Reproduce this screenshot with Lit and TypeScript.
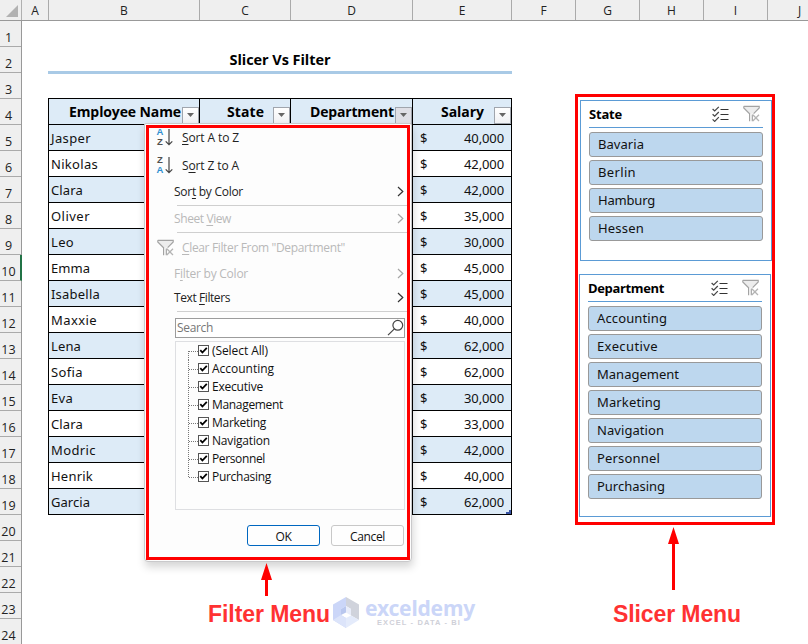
import { LitElement, html, css, svg } from "lit";
import { customElement, property } from "lit/decorators.js";
import { classMap } from "lit/directives/class-map.js";

/** A run of text whose tracking is adjusted so that it fills `w` pixels. */
@customElement("fit-text")
class FitText extends LitElement {
  @property({ type: Number }) w = 0;
  static styles = css`
    :host {
      display: inline-block;
      white-space: pre;
      flex: none;
    }
  `;
  updated() {
    this.style.letterSpacing = "0px";
    const n = (this.textContent ?? "").length;
    const natural = this.getBoundingClientRect().width;
    if (n && this.w) this.style.letterSpacing = `${(this.w - natural) / n}px`;
  }
  render() {
    return html`<slot></slot>`;
  }
}

const COLUMNS: [string, number][] = [
  ["A", 27], ["B", 151], ["C", 91], ["D", 122], ["E", 99],
  ["F", 64], ["G", 64], ["H", 64], ["I", 64], ["J", 64],
];
const ROWS = Array.from({ length: 24 }, (_, i) => i + 1);

const PEOPLE: [string, number, string][] = [
  ["Jasper", 40, "40,000"], ["Nikolas", 47, "42,000"], ["Clara", 32, "42,000"],
  ["Oliver", 39, "35,000"], ["Leo", 23, "30,000"], ["Emma", 39, "45,000"],
  ["Isabella", 49, "45,000"], ["Maxxie", 46, "40,000"], ["Lena", 30, "62,000"],
  ["Sofia", 32, "62,000"], ["Eva", 22, "30,000"], ["Clara", 32, "33,000"],
  ["Modric", 45, "42,000"], ["Henrik", 42, "40,000"], ["Garcia", 39, "62,000"],
];

const CHOICES: [string, number][] = [
  ["(Select All)", 56], ["Accounting", 62], ["Executive", 51], ["Management", 71],
  ["Marketing", 54], ["Navigation", 58], ["Personnel", 53], ["Purchasing", 59],
];

const STATES: [string, number][] = [
  ["Bavaria", 46], ["Berlin", 38], ["Hamburg", 57], ["Hessen", 46],
];
const DEPARTMENTS: [string, number][] = [
  ["Accounting", 70], ["Executive", 61], ["Management", 82], ["Marketing", 64],
  ["Navigation", 67], ["Personnel", 63], ["Purchasing", 68],
];

const funnel = svg`
  <path d="M1.4 1.9H15.6V2.8L9.6 8.8H7L1.4 3Z" fill="#ededed"/>
  <path d="M.8 1.3H16.2V3L10.6 8.6M.8 1.3V3L6.6 8.8V16.2M9.3 16.2V9.6" fill="none" stroke="#a3a3a3" stroke-width="1.2"/>
  <path d="M9.8 9.8L16 16M16 9.8L9.8 16" fill="none" stroke="#b4b4b4" stroke-width="1.3"/>`;

const funnelIcon = html`<svg class="funnel" width="17" height="17" viewBox="0 0 17 17">${funnel}</svg>`;

const checklistIcon = html`<svg width="17" height="16" viewBox="0 0 17 16" fill="none" stroke="#444" stroke-width="1.2">
  <path d="M.6 3L2.7 5L6.8 .8M.6 8.2L2.7 10.2L6.8 6M.6 13.4L2.7 15.4L6.8 11.2"/>
  <path d="M8.5 3.5H16.5M8.5 8.5H16.5M8.5 13.5H16.5" stroke="#333"/>
</svg>`;

const chevron = html`<svg class="chev" width="7" height="11" viewBox="0 0 7 11" fill="none" stroke="currentColor" stroke-width="1.2"><path d="M1 1L5.8 5.5L1 10"/></svg>`;

const sortIcon = (top: string, bottom: string) => html`<span class="sort">
  <span class="letters"><i class=${classMap({ blue: top === "A" })}>${top}</i><i class=${classMap({ blue: bottom === "A" })}>${bottom}</i></span>
  <svg width="8" height="17" viewBox="0 0 8 17" fill="none" stroke="#444" stroke-width="1.2"><path d="M4 0V15.6M.7 12.3L4 15.7L7.3 12.3"/></svg>
</span>`;

@customElement("filter-menu")
class FilterMenu extends LitElement {
  static styles = css`
    :host {
      display: block;
      box-sizing: border-box;
      background: #fdfdfd;
      border: 1px solid #c9c9cb;
      border-radius: 2px 2px 4px 4px;
      box-shadow: 1px 5px 9px rgba(0, 0, 0, 0.17);
      color: #222;
      font: 12px/16px "Open Sans", sans-serif;
    }
    .body { padding: 1px 2px 0 11px; }
    .item { display: flex; align-items: center; height: 26px; padding-left: 18px; }
    .item.icon { padding-left: 0; }
    .item.second { margin-top: 2px; }
    .item.clear { margin-top: 2px; }
    .item.text { height: 22px; margin-bottom: 2px; }
    .lead { width: 26px; display: flex; align-items: center; flex: none; }
    .off { color: #b9b9b9; }
    .chev { margin-left: auto; margin-right: 5px; margin-bottom: 1px; color: #333; }
    .off .chev { color: #a5a5a5; }
    .funnel { margin-left: 1px; margin-top: -1px; }
    .sep { height: 1px; background: #cfcfcf; margin-left: 21px; }
    .item u { text-underline-offset: 2px; text-decoration-thickness: 1px; }
    .sort { display: flex; align-items: center; gap: 1px; height: 20px; margin-top: -2px; }
    .letters { display: flex; flex-direction: column; width: 8px; }
    .letters i { font: bold 9.5px/10px "Liberation Sans", sans-serif; color: #505050; text-align: center; }
    .letters i.blue { color: #2e8fd0; }
    .search {
      box-sizing: border-box; display: flex; align-items: center; justify-content: space-between;
      width: 230px; height: 20px; margin: 6px 0 0 19px; padding: 0 0 1px 1px;
      border: 1px solid #9c9c9c; background: #fff; color: #777;
    }
    .list {
      box-sizing: border-box; width: 230px; height: 169px; margin: 3px 0 0 19px;
      border: 1px solid #dedfe2; padding: 0 0 0 12px; color: #111;
    }
    .choice { display: flex; align-items: center; height: 18px; }
    .branch { width: 10px; height: 18px; flex: none; }
    .box { margin: 0 3px 1px 0; flex: none; }
    .actions { display: flex; gap: 11px; margin: 15px 0 0 91px; }
    .btn {
      box-sizing: border-box; width: 73px; height: 21px; border: 1px solid #c8c8c8; border-radius: 3px;
      background: #fefefe; color: #111; display: flex; align-items: center; justify-content: center;
      padding-top: 2px;
    }
    .btn.primary { border-color: #0067c0; }
  `;
  render() {
    return html`<div class="body">
      <div class="item icon"><span class="lead">${sortIcon("A", "Z")}</span><fit-text w="57"><u>S</u>ort A to Z</fit-text></div>
      <div class="item icon second"><span class="lead">${sortIcon("Z", "A")}</span><fit-text w="57">S<u>o</u>rt Z to A</fit-text></div>
      <div class="item"><fit-text w="69">Sor<u>t</u> by Color</fit-text>${chevron}</div>
      <div class="sep"></div>
      <div class="item off"><fit-text w="57">Sheet <u>V</u>iew</fit-text>${chevron}</div>
      <div class="sep"></div>
      <div class="item icon off clear"><span class="lead">${funnelIcon}</span><fit-text w="163"><u>C</u>lear Filter From "Department"</fit-text></div>
      <div class="item off"><fit-text w="74">F<u>i</u>lter by Color</fit-text>${chevron}</div>
      <div class="item text"><fit-text w="56">Text <u>F</u>ilters</fit-text>${chevron}</div>
      <div class="sep"></div>
      <div class="search"><fit-text w="36">Search</fit-text>
        <svg width="17" height="17" viewBox="0 0 17 17" fill="none" stroke="#444" stroke-width="1.2"><circle cx="10.8" cy="6.3" r="4.9"/><path d="M7.4 9.8L1 16.2"/></svg>
      </div>
      <div class="list">
        ${CHOICES.map(([name, w], i) => html`<div class="choice">
          <svg class="branch" viewBox="0 0 10 18" stroke="#777" stroke-dasharray="1 1" fill="none">
            <path d=${`M.5 ${i === 0 ? 9 : 0}V${i === CHOICES.length - 1 ? 10 : 18}M1 9.5H10`}/>
          </svg>
          <svg class="box" width="11" height="11" viewBox="0 0 11 11"><rect x=".5" y=".5" width="10" height="10" fill="#fff" stroke="#555"/><path d="M2.3 5.2L4.4 7.5L8.8 2.8" fill="none" stroke="#000" stroke-width="1.8"/></svg>
          <fit-text w=${w}>${name}</fit-text>
        </div>`)}
      </div>
      <div class="actions">
        <div class="btn primary"><fit-text w="16">OK</fit-text></div>
        <div class="btn"><fit-text w="35">Cancel</fit-text></div>
      </div>
    </div>`;
  }
}

@customElement("slicer-panel")
class SlicerPanel extends LitElement {
  @property() caption = "";
  @property({ type: Number }) captionWidth = 0;
  @property({ attribute: false }) items: [string, number][] = [];
  static styles = css`
    :host {
      display: block; box-sizing: border-box; background: #fff; border: 1px solid #5b9bd5;
      padding: 0 8px; color: #111; font: 13px/18px "Noto Sans", sans-serif;
    }
    .head {
      display: flex; align-items: center; height: 26px; border-bottom: 1px solid #5b9bd5;
      font-weight: bold; color: #000; font-family: "Open Sans", sans-serif;
    }
    .icons { display: flex; align-items: center; gap: 14px; margin: -1px 3px 0 auto; }
    .icons svg { display: block; }
    .list { display: flex; flex-direction: column; gap: 3px; padding-top: 4px; }
    .btn {
      box-sizing: border-box; height: 25px; border: 1px solid #999; border-radius: 3px;
      background: #bdd7ee; padding: 0 0 2px 8px; display: flex; align-items: center;
    }
  `;
  render() {
    return html`<div class="head"><fit-text .w=${this.captionWidth}>${this.caption}</fit-text>
        <div class="icons">${checklistIcon}${funnelIcon}</div></div>
      <div class="list">${this.items.map(([n, w]) => html`<div class="btn"><fit-text w=${w}>${n}</fit-text></div>`)}</div>`;
  }
}

@customElement("app-root")
class AppRoot extends LitElement {
  static styles = css`
    :host {
      display: block; width: 808px; height: 644px; overflow: hidden; position: relative;
      background: #fff; color: #111; font: 13px/18px "Noto Sans", sans-serif;
    }
    .cols { display: flex; height: 21px; box-sizing: border-box; background: #efefef; border-bottom: 1px solid #999; width: 860px; }
    .corner { width: 22px; box-sizing: border-box; border-right: 1px solid #b0b0b0; flex: none; }
    .corner svg { display: block; }
    .col {
      box-sizing: border-box; flex: none; text-align: center; font: 12px/21px "Open Sans", sans-serif;
      border-right: 1px solid #aaa; color: #222;
    }
    .below { display: flex; }
    .rows { width: 22px; box-sizing: border-box; background: #efefef; border-right: 1px solid #999; flex: none; }
    .row {
      box-sizing: border-box; height: 26px; border-bottom: 1px solid #aaa; padding: 8px 4px 0 0;
      text-align: center; color: #222; font: 12.5px/18px "Open Sans", sans-serif;
    }
    .row.current { border-right: 2px solid #217346; margin-right: -1px; padding-right: 3px; }
    .sheet { padding: 26px 0 0 26px; }
    .title {
      box-sizing: border-box; width: 464px; height: 27px; border-bottom: 3px solid #a9cae6; color: #000;
      display: flex; justify-content: center; align-items: center; padding-top: 2px;
      font: bold 14.5px/18px "Open Sans", sans-serif;
    }
    .table {
      width: 464px; box-sizing: border-box; margin-top: 24px; border: solid #000; border-width: 1px 0 0 1px;
      display: grid; grid-template-columns: 151px 91px 122px 99px; grid-auto-rows: 26px;
    }
    .cell {
      box-sizing: border-box; border: solid #000; border-width: 0 1px 1px 0; padding: 0 7px 0 2px;
      display: flex; align-items: center; justify-content: space-between; background: #fff; position: relative;
    }
    .band { background: #ddebf7; }
    .head {
      background: #ddebf7; font: bold 14px/18px "Open Sans", sans-serif; color: #000; padding: 0;
      justify-content: flex-end;
    }
    .head fit-text { margin-top: 1px; }
    .drop {
      box-sizing: border-box; width: 17px; height: 17px; border: 1px solid #a0a5ad; margin-top: 7px;
      background: linear-gradient(#fff, #f0f1f4); display: grid; place-items: center; flex: none;
    }
    .drop.active { background: #dfdfe6; }
    .handle { position: absolute; right: 0; bottom: 0; }
    .money { padding-left: 7px; }
    .menu { position: absolute; left: 144px; top: 123px; width: 268px; height: 439px; }
    .mark { position: absolute; box-sizing: border-box; border: 3px solid #ff0000; }
    .mark.filter { left: 146px; top: 125px; width: 264px; height: 435px; }
    .mark.slicer { left: 575px; top: 94px; width: 200px; height: 431px; }
    .state { position: absolute; left: 580px; top: 100px; width: 192px; height: 161px; }
    .department { position: absolute; left: 579px; top: 274px; width: 192px; height: 243px; }
    .arrow { position: absolute; }
    .arrow.filter { left: 261px; top: 563px; }
    .arrow.slicer { left: 668px; top: 527px; }
    .label { position: absolute; font: bold 23px/28px "Liberation Sans", sans-serif; color: #ff3232; }
    .label.filter { left: 208px; top: 600px; }
    .label.slicer { left: 613px; top: 600px; }
    .brand { position: absolute; left: 332px; top: 596px; display: flex; gap: 5px; color: #cbd6f8; }
    .words { display: flex; flex-direction: column; align-items: flex-start; }
    .name { font: bold 21px/24px "Noto Sans", sans-serif; }
    .tag { font: bold 7.5px/8px "Liberation Sans", sans-serif; color: #cfd0d8; margin: -1px 0 0 12px; }
  `;

  private head(name: string, w: number, gap: number, active = false) {
    return html`<div class="cell head"><fit-text w=${w} style=${`margin-right:${gap}px`}>${name}</fit-text>
      <div class=${classMap({ drop: true, active })}><svg width="7" height="4" viewBox="0 0 7 4"><path d="M0 0H7L3.5 4Z" fill="#666"/></svg></div></div>`;
  }

  private arrow(kind: string, h: number) {
    return html`<svg class="arrow ${kind}" width="11" height=${h} viewBox="0 0 11 ${h}"><path d=${`M5.5 0L11 17H7V${h}H4V17H0Z`} fill="#f00"/></svg>`;
  }

  render() {
    return html`
      <div class="cols">
        <div class="corner"><svg width="21" height="20" viewBox="0 0 21 20"><path d="M18 5V17H6Z" fill="#b2b2b2"/></svg></div>
        ${COLUMNS.map(([n, w]) => html`<div class="col" style=${`width:${w}px`}>${n}</div>`)}
      </div>
      <div class="below">
        <div class="rows">${ROWS.map((n) => html`<div class=${classMap({ row: true, current: n === 10 })}>${n}</div>`)}</div>
        <div class="sheet">
          <div class="title"><fit-text w="101">Slicer Vs Filter</fit-text></div>
          <div class="table">
            ${this.head("Employee Name", 112, 1)}
            ${this.head("State", 37, 9)}
            ${this.head("Department", 84, 1, true)}
            ${this.head("Salary", 43, 10)}
            ${PEOPLE.map(([name, w, pay], i) => {
              const cell = classMap({ cell: true, band: i % 2 === 0 });
              const money = classMap({ cell: true, money: true, band: i % 2 === 0 });
              return html`<div class=${cell}><fit-text w=${w}>${name}</fit-text></div>
                <div class=${cell}></div><div class=${cell}></div>
                <div class=${money}><span>$</span><fit-text w="40">${pay}</fit-text>
                  ${i === PEOPLE.length - 1
                    ? html`<svg class="handle" width="5" height="4" viewBox="0 0 5 4"><path d="M3 0H5V4H0V2H3Z" fill="#3a55a5"/></svg>`
                    : null}</div>`;
            })}
          </div>
        </div>
      </div>
      <filter-menu class="menu"></filter-menu>
      <slicer-panel class="state" caption="State" .captionWidth=${33} .items=${STATES}></slicer-panel>
      <slicer-panel class="department" caption="Department" .captionWidth=${76} .items=${DEPARTMENTS}></slicer-panel>
      <div class="mark filter"></div>
      <div class="mark slicer"></div>
      ${this.arrow("filter", 33)}${this.arrow("slicer", 63)}
      <fit-text class="label filter" w="122">Filter Menu</fit-text>
      <fit-text class="label slicer" w="128">Slicer Menu</fit-text>
      <div class="brand">
        <svg width="28" height="33" viewBox="0 0 28 33">
          <path d="M14 1L1 8.5V24L14 32V22L9 19V13L14 10Z" fill="#cbd6f8"/>
          <path d="M14 1L27 8.5V24L19 19.5V13L14 10Z" fill="#d0d3dc"/>
          <path d="M14 32L27 24L19 19.5L14 22Z" fill="#e4ebfb"/>
          <path d="M1 24L9 19L14 22V32Z" fill="#dce4fa"/>
          <path d="M14 10L19 13V19.5L14 16.5Z" fill="#e9edfa"/>
          <path d="M14 10V16.5L9 19V13Z" fill="#b9c7ee"/>
        </svg>
        <div class="words"><fit-text class="name" w="110">exceldemy</fit-text><fit-text class="tag" w="84">EXCEL - DATA - BI</fit-text></div>
      </div>
    `;
  }
}
